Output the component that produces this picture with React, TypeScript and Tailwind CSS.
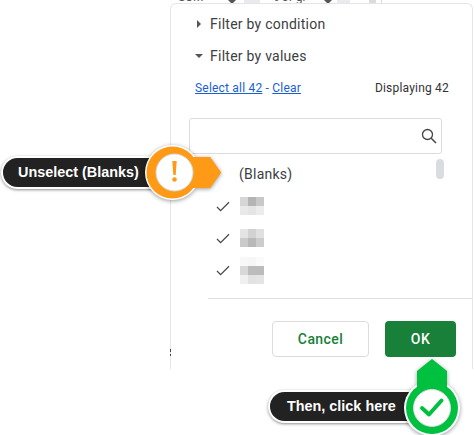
const checks = [
  [
    ["#d6d6d6", "#b4b4b4", "#c8c8c8"],
    ["#e9e9e9", "#e4e4e4", "#ececec"],
  ],
  [
    ["#e4e4e4", "#d2d2d2", "#e0e0e0"],
    ["#cacaca", "#b8b8b8", "#cccccc"],
  ],
  [
    ["#f8f8f8", "#f6f6f6", "#fbfbfb"],
    ["#d8d8d8", "#bcbcbc", "#bcbcbc"],
    ["#f0f0f0", "#e2e2e2", "#e4e4e4"],
  ],
];

function Check() {
  return (
    <svg width="14" height="11" viewBox="0 0 14 11" fill="none" className="shrink-0">
      <path d="M1 6l3.6 3.6L13 1.2" stroke="#4a4a4a" strokeWidth="1.3" />
    </svg>
  );
}

// blurred out cell value
function Blur({ cells }: { cells: string[][] }) {
  return (
    <div className="flex flex-col">
      {cells.map((row, i) => (
        <div key={i} className="flex">
          {row.map((c, j) => (
            <div key={j} className="w-2 h-[9px]" style={{ backgroundColor: c }} />
          ))}
        </div>
      ))}
    </div>
  );
}

export default function App() {
  return (
    <div className="relative w-[474px] h-[435px] overflow-hidden bg-white font-['Roboto',sans-serif] text-[#3c4043]">
      <div className="pl-[170px]">
        {/* sheet header peeking out above the panel */}
        <div className="flex h-[3px] overflow-hidden text-[12px] leading-none text-[#555]">
          <span className="ml-[8px] w-[50px] -mt-[9px]">SUM</span>
          <span className="w-0 h-0 border-x-[4px] border-x-transparent border-t-[4px] border-t-[#555]" />
          <div className="w-[16px] bg-[#e8eaed] ml-[8px]" />
          <span className="ml-[10px] w-[54px] -mt-[9px]">% of gr</span>
          <span className="w-0 h-0 border-x-[4px] border-x-transparent border-t-[4px] border-t-[#555]" />
          <div className="w-[13px] bg-[#e8eaed] ml-[5px]" />
          <div className="w-[7px] bg-[#dadce0] ml-[19px]" />
          <div className="w-px bg-[#dadce0] ml-[5px]" />
        </div>

        <div className="h-[366px] w-[303px] rounded-t-[6px] border-l border-r border-t border-[#e6e6e6] bg-white">
          <div className="flex flex-col">
            <div className="flex items-center h-[20px] mt-[10px] pl-[26px] gap-[9px] text-[14px] tracking-[0.25px]">
              <span className="w-0 h-0 border-y-[4px] border-y-transparent border-l-[4px] border-l-[#555]" />
              <span>Filter by condition</span>
            </div>
            <div className="flex items-center h-[20px] mt-[12px] pl-[24px] gap-[7px] text-[14px] tracking-[0.25px]">
              <span className="w-0 h-0 border-x-[4px] border-x-transparent border-t-[4px] border-t-[#555]" />
              <span>Filter by values</span>
            </div>
            <div className="flex items-center justify-between h-[16px] mt-[14px] pl-[24px] pr-[23px] text-[12px] tracking-[0.2px]">
              <span className="text-[#1a5fd0]">
                <span className="underline">Select all 42</span> - <span className="underline">Clear</span>
              </span>
              <span className="text-[#333]">Displaying 42</span>
            </div>
            <div className="flex items-center justify-end ml-[18px] mt-[22px] w-[253px] h-[36px] rounded-[3px] border border-[#dadce0] pr-[4px]">
              <svg width="16" height="16" viewBox="0 0 16 16" fill="none">
                <circle cx="6.5" cy="6.5" r="5" stroke="#444" strokeWidth="1.3" />
                <path d="M10.2 10.2L15 15" stroke="#444" strokeWidth="1.5" />
              </svg>
            </div>

            <div className="relative h-[144px]">
              <div className="absolute left-[265px] top-[5px] w-2 h-5 rounded-[4px] bg-[#dadce0]" />
              <div className="pl-[68px] pt-[10px] text-[14px] leading-[20px] tracking-[0.25px] h-[36px]">(Blanks)</div>
              {checks.map((cells, i) => (
                <div key={i} className="flex items-center h-[32px] pl-[45px] gap-[10px]">
                  <Check />
                  <Blur cells={cells} />
                </div>
              ))}
            </div>

            <div className="ml-[37px] border-t border-[#e0e0e0]" />
            <div className="flex justify-end gap-[16px] mt-[22px] pr-[16px]">
              <div className="flex items-center justify-center w-[97px] h-[36px] rounded-[4px] border border-[#dadce0] text-[14px] font-medium tracking-[0.4px] text-[#188038]">
                Cancel
              </div>
              <div className="flex items-center justify-center w-[71px] h-[36px] rounded-[4px] bg-[#188038] text-[14px] font-medium tracking-[0.4px] text-white">
                OK
              </div>
            </div>
          </div>
        </div>
      </div>

      {/* bits of sheet text clipped by the panel edge */}
      <div className="absolute left-[170px] top-[349px] w-px h-[3px] bg-[#444]" />
      <div className="absolute left-[170px] top-[354px] w-px h-[2px] bg-[#444]" />

      {/* orange callout */}
      <div className="absolute left-[1px] top-[156px] w-[165px] h-[33px] pl-[15px] flex items-center rounded-l-full border-y-2 border-l-2 border-white bg-[#222] shadow-[0_1px_3px_rgba(0,0,0,0.45)] font-['Liberation_Sans',sans-serif] text-[14.4px] font-bold text-white">
        Unselect (Blanks)
      </div>
      <svg className="absolute left-[140px] top-[140px] drop-shadow-[0_1px_2px_rgba(0,0,0,0.4)]" width="90" height="64" viewBox="0 0 90 64">
        <path d="M50 17H70L81 32.5L70 48H50Z" fill="#ff9a17" />
        <circle cx="32.5" cy="32.5" r="27.5" fill="#fff" />
        <path d="M50 17H70L81 32.5L70 48H50Z" fill="#ff9a17" />
        <circle cx="32.5" cy="32.5" r="26" fill="#ff9a17" />
        <circle cx="34.5" cy="32.5" r="18.5" fill="#fff" stroke="#d8d8d8" strokeWidth="1" />
        <path d="M32.3 21H36.7L35.7 35H33.3Z" fill="#ff9a17" />
        <circle cx="34.5" cy="39.5" r="2.3" fill="#ff9a17" />
      </svg>

      {/* green callout */}
      <div className="absolute left-[268px] top-[390px] w-[150px] h-[33px] pl-[17px] flex items-center rounded-l-full border-y-2 border-l-2 border-white bg-[#222] shadow-[0_1px_3px_rgba(0,0,0,0.45)] font-['Liberation_Sans',sans-serif] text-[14.4px] font-bold text-white">
        Then, click here
      </div>
      <svg className="absolute left-[400px] top-[355px] drop-shadow-[0_1px_2px_rgba(0,0,0,0.4)]" width="64" height="80" viewBox="0 0 64 80">
        <circle cx="32" cy="53" r="28" fill="#fff" />
        <path d="M32 4L47 16V38H17V16Z" fill="#00c13f" />
        <circle cx="32" cy="53" r="26" fill="#00c13f" />
        <circle cx="32" cy="53" r="18.5" fill="#fff" stroke="#d8d8d8" strokeWidth="1" />
        <path d="M22 53L29 59.5L41.5 45.5" fill="none" stroke="#00c13f" strokeWidth="4" strokeLinecap="round" strokeLinejoin="round" />
      </svg>
    </div>
  );
}
